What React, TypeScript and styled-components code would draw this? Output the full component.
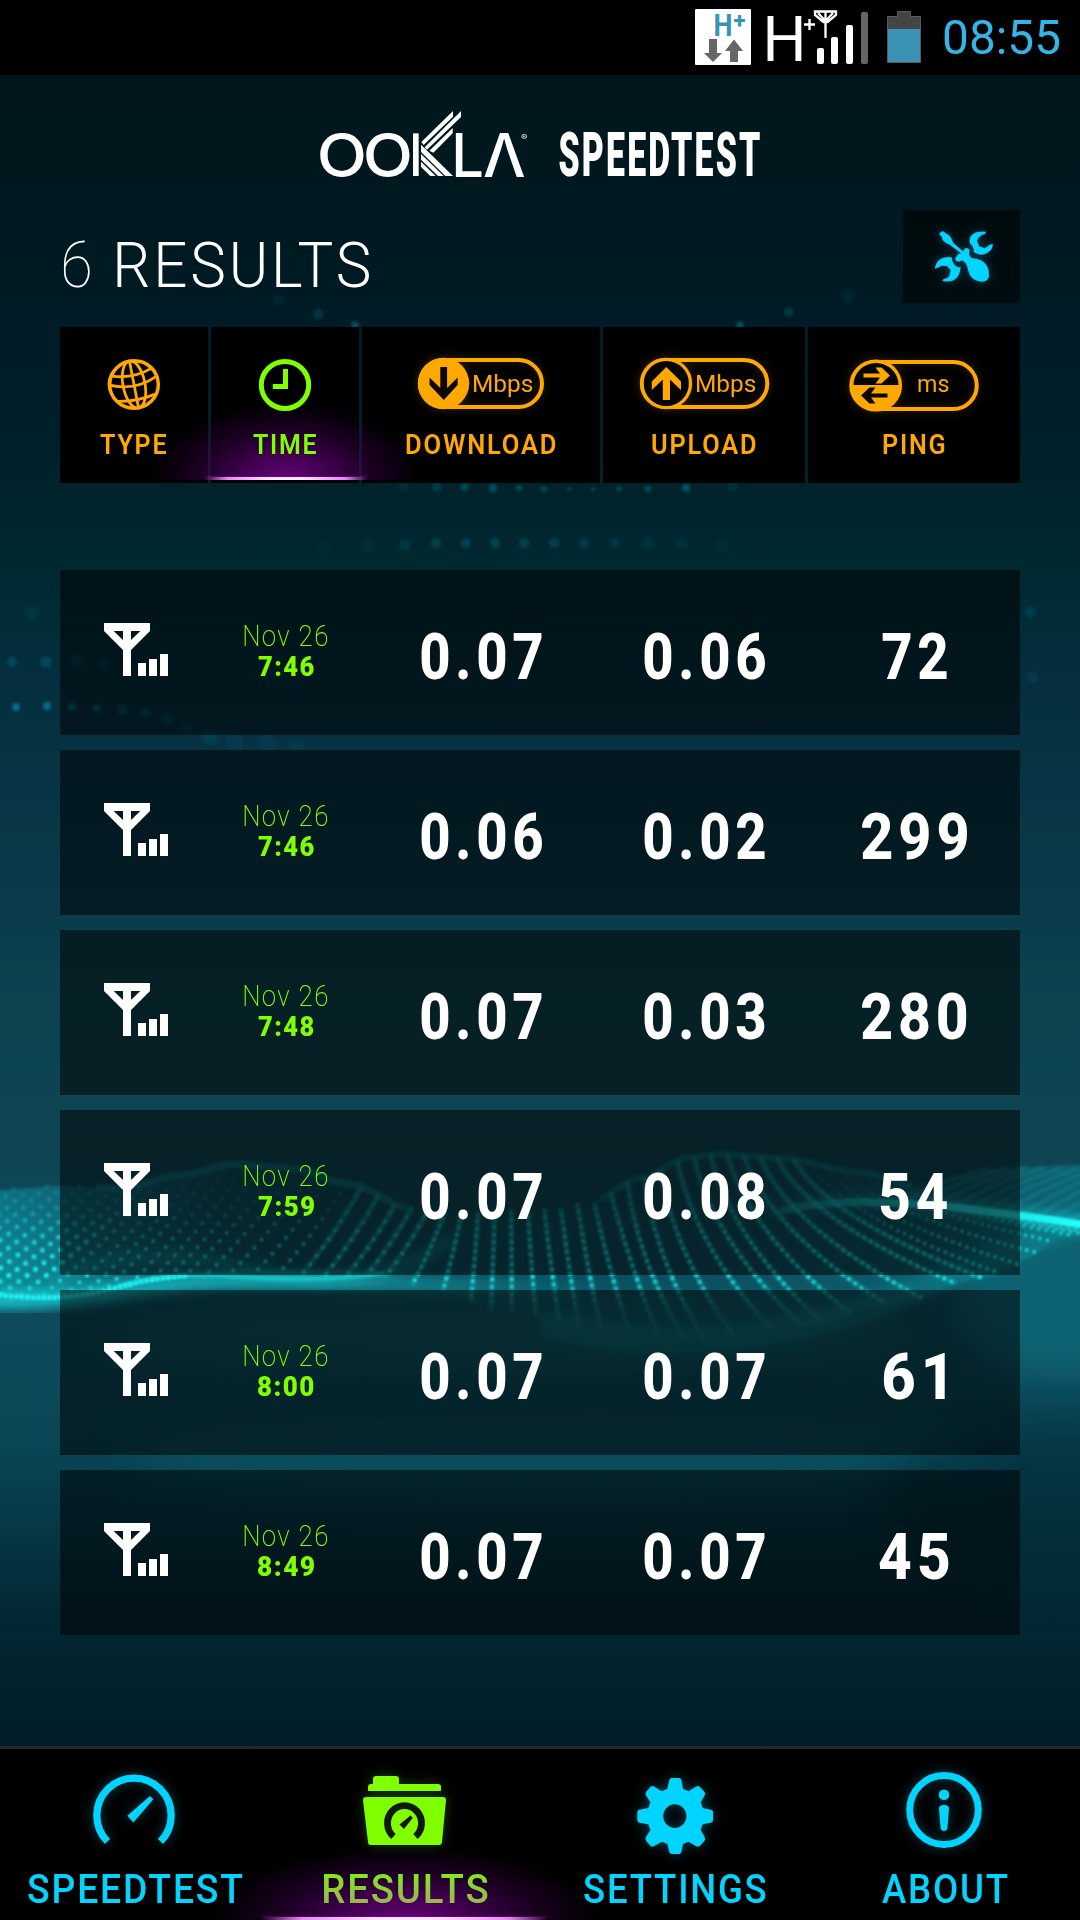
import React, { useLayoutEffect, useRef, useState } from 'react';
import styled, { createGlobalStyle } from 'styled-components';

const CYAN = '#00d4ff';
const ORANGE = '#ffa800';
const GREEN = '#80ff00';

const GlobalStyle = createGlobalStyle`
  *, *::before, *::after { box-sizing: border-box; }
  html, body { margin: 0; padding: 0; background: #000; }
  body { font-family: Roboto, 'Open Sans', 'Liberation Sans', sans-serif; }
  svg { display: block; flex: none; }
`;

/* ---------- Text fitted to an exact ink width ---------- */

const FitBox = styled.span<{ $w: number; $h: number }>`
  display: block;
  flex: none;
  width: ${p => p.$w}px;
  height: ${p => p.$h}px;
`;

const FitInk = styled.span<{
  $size: number; $h: number; $weight: number; $color: string; $spacing: number; $family?: string; $fade?: string;
}>`
  display: block;
  width: max-content;
  white-space: nowrap;
  transform-origin: 0 50%;
  font-family: ${p => p.$family ?? "Roboto, 'Liberation Sans', sans-serif"};
  font-size: ${p => p.$size}px;
  line-height: ${p => p.$h}px;
  font-weight: ${p => p.$weight};
  letter-spacing: ${p => p.$spacing}px;
  color: ${p => p.$color};
  ${p => p.$fade && `
    background: linear-gradient(${p.$color} 12%, ${p.$fade} 82%);
    background-clip: text;
    -webkit-background-clip: text;
    color: transparent;
  `}
`;

type FitProps = {
  children: string; w: number; h: number; size: number; weight?: number;
  color?: string; spacing?: number; family?: string; fade?: string;
};

function Fit({ children, w, h, size, weight = 400, color = '#fff', spacing = 0, family, fade }: FitProps) {
  const ref = useRef<HTMLSpanElement>(null);
  const [transform, setTransform] = useState('none');
  useLayoutEffect(() => {
    const el = ref.current;
    const ctx = document.createElement('canvas').getContext('2d');
    if (!el || !ctx) return;
    const cs = getComputedStyle(el);
    ctx.font = `${cs.fontWeight} ${cs.fontSize} ${cs.fontFamily}`;
    (ctx as any).letterSpacing = `${spacing}px`;
    const m = ctx.measureText(children);
    const left = -m.actualBoundingBoxLeft;
    const scale = w / (m.actualBoundingBoxRight - left);
    setTransform(`translateX(${-left * scale}px) scaleX(${scale})`);
  }, [children, w, spacing]);
  return (
    <FitBox $w={w} $h={h}>
      <FitInk ref={ref} $size={size} $h={h} $weight={weight} $color={color} $spacing={spacing}
        $family={family} $fade={fade} style={{ transform }}>
        {children}
      </FitInk>
    </FitBox>
  );
}

/* ---------- Page frame ---------- */

const Screen = styled.div`
  position: relative;
  display: flex;
  flex-direction: column;
  width: 1080px;
  height: 1920px;
  overflow: hidden;
  background: linear-gradient(180deg,
    #00161c 75px, #00181f 200px, #001b25 310px, #00222b 480px, #002a33 590px, #052f3f 690px,
    #0a3b4a 900px, #0c434f 1000px, #0f4553 1150px, #0e4c5d 1300px, #0a4656 1440px,
    #073c4a 1500px, #032a36 1600px, #001d26 1746px);
`;

const Backdrop = styled.svg`
  position: absolute;
  inset: 0;
`;

const StatusBar = styled.div`
  position: relative;
  display: flex;
  align-items: center;
  justify-content: flex-end;
  height: 75px;
  padding-right: 20.5px;
  background: #000;
`;

const Main = styled.main`
  position: relative;
  flex: 1;
  display: flex;
  flex-direction: column;
`;

const Brand = styled.div`
  display: flex;
  align-items: center;
  justify-content: center;
  height: 135px;
  padding-top: 25px;
`;

const LogoPart = styled.div<{ $ml?: number; $mb?: number }>`
  margin-left: ${p => p.$ml ?? 0}px;
  margin-bottom: ${p => p.$mb ?? 0}px;
`;

const TitleRow = styled.div`
  display: flex;
  justify-content: space-between;
  height: 93px;
  padding: 0 60px 0 64px;
`;

const Title = styled.h1`
  display: flex;
  align-items: center;
  gap: 27px;
  margin: 0;
  padding-top: 18px;
`;

const ToolsButton = styled.button`
  display: flex;
  align-items: center;
  justify-content: center;
  width: 117px;
  height: 93px;
  padding: 0 0 0 4px;
  border: 0;
  background: rgba(0, 0, 0, 0.55);
`;

const columns = 'display: grid; grid-template-columns: 148px 148px 238px 202px 212px; column-gap: 3px;';

const TableHead = styled.div`
  ${columns}
  height: 156px;
  margin: 24px 60px 0;
`;

const HeadCell = styled.div`
  position: relative;
  display: flex;
  flex-direction: column;
  align-items: center;
  gap: 18px;
  padding: 30px 1px 0 0;
  background: #000;
`;

const Glow = styled.div<{ $x: number; $w: number; $h: number; $bottom: number; $line: number }>`
  position: absolute;
  z-index: 1;
  left: ${p => p.$x}px;
  bottom: ${p => p.$bottom}px;
  width: ${p => p.$w}px;
  height: ${p => p.$h}px;
  background: radial-gradient(ellipse 50% 100% at 50% 100%,
    rgba(118, 0, 142, 0.85), rgba(92, 0, 112, 0.68) 35%, rgba(60, 0, 76, 0.45) 65%, rgba(30, 0, 40, 0) 100%);
  pointer-events: none;
  &::after {
    content: '';
    position: absolute;
    left: 50%;
    bottom: 0;
    width: ${p => p.$line}px;
    height: 3px;
    margin-left: ${p => -p.$line / 2}px;
    background: linear-gradient(90deg, transparent, #e48af0 14%, #ffe4ff 40%, #ffe4ff 60%, #e48af0 86%, transparent);
    box-shadow: 0 -1px 1px rgba(200, 0, 230, 0.3);
  }
`;

const List = styled.div`
  display: flex;
  flex-direction: column;
  gap: 15px;
  margin: 87px 60px 0;
`;

const ResultRow = styled.div`
  ${columns}
  height: 165px;
  background: rgba(0, 0, 0, 0.52);
`;

const Cell = styled.div<{ $top?: number; $bottom?: number; $left?: number }>`
  display: flex;
  flex-direction: column;
  align-items: center;
  justify-content: center;
  padding: ${p => p.$top ?? 0}px 0 ${p => p.$bottom ?? 0}px ${p => p.$left ?? 1.5}px;
`;

const Nav = styled.nav`
  position: relative;
  display: grid;
  grid-template-columns: repeat(4, 270px);
  height: 174px;
  border-top: 3px solid #20282b;
  background: #000;
`;

const NavItem = styled.div`
  position: relative;
  display: flex;
  flex-direction: column;
  align-items: center;
  gap: 9px;
  padding-top: 16px;
`;

const Lift = styled.div`
  position: relative;
  z-index: 2;
`;

/* ---------- Backdrop drawing ---------- */

const lerpTable = (table: number[][], x: number, k = 1) => {
  if (x <= table[0][0]) return table[0][k];
  for (let i = 1; i < table.length; i++) {
    if (x <= table[i][0]) {
      const t = (x - table[i - 1][0]) / (table[i][0] - table[i - 1][0]);
      const s = t * t * (3 - 2 * t);
      return table[i - 1][k] + (table[i][k] - table[i - 1][k]) * s;
    }
  }
  return table[table.length - 1][k];
};

const crest = [[0, 1190], [60, 1186], [120, 1188], [180, 1175], [235, 1164], [290, 1168], [350, 1184], [410, 1208],
  [470, 1214], [545, 1210], [590, 1203], [640, 1178], [690, 1157], [720, 1154], [780, 1158], [860, 1172], [920, 1186]];
const trough = [[-60, 1292], [60, 1298], [120, 1287], [190, 1276], [370, 1276], [440, 1292], [500, 1312], [600, 1328],
  [700, 1340], [800, 1326], [900, 1303], [980, 1278], [1080, 1235]];
const shear = [[-40, -150], [120, -130], [265, -95], [420, -45], [490, -4], [560, 18], [640, 60], [700, 110], [800, 190], [920, 200]];

const strands = Array.from({ length: 57 }, (_, i) => {
  const x = -20 + i * 16.6;
  const bx = x + lerpTable(shear, x);
  const y0 = lerpTable(crest, x);
  const y1 = lerpTable(trough, bx);
  const pull = x > 620 ? 0.18 : 0.4;
  return { x, d: `M${x.toFixed(1)} ${y0.toFixed(1)}Q${(x + (bx - x) * pull).toFixed(1)} ${((y0 + y1) / 2).toFixed(1)} ${bx.toFixed(1)} ${y1.toFixed(1)}` };
});

const curve = (table: number[][], from: number, to: number) => {
  const pts: string[] = [];
  for (let x = from; x <= to; x += 12) pts.push(`${x} ${lerpTable(table, x).toFixed(1)}`);
  return pts.join('L');
};

const motes: number[][] = [
  [279, 300, 6, 0.1], [318, 314, 5, 0.28], [355, 325, 3.5, 0.6],
  [740, 325, 3.5, 0.6], [789, 312, 5, 0.28], [848, 297, 7, 0.1],
  [403, 487, 5, 0.12], [437, 487, 5, 0.25], [465, 487, 4, 0.42], [493, 488, 4, 0.5], [519, 488, 3, 0.5], [544, 489, 3, 0.45],
  [569, 489, 2, 0.5], [593, 489, 2, 0.5], [619, 489, 2.5, 0.5], [648, 489, 3, 0.5], [686, 488, 4, 0.55], [733, 487, 5, 0.18],
  [325, 547, 8, 0.04], [368, 546, 7, 0.09], [405, 545, 6, 0.18], [436, 543, 5, 0.28], [466, 543, 5, 0.32], [495, 543, 5, 0.32],
  [524, 543, 5, 0.3], [554, 543, 5, 0.28], [584, 543, 5, 0.22], [615, 543, 5, 0.2], [648, 543, 6, 0.15], [682, 543, 6, 0.1], [722, 545, 7, 0.06],
  [32, 613, 7, 0.12], [1030, 612, 6, 0.2], [1033, 677, 6, 0.14],
  [12, 662, 5, 0.32], [46, 662, 6, 0.3], [77, 661, 6, 0.2], [103, 663, 6, 0.16],
  [16, 707, 4, 0.75], [47, 706, 4, 0.75], [72, 707, 4, 0.6], [97, 708, 4, 0.55], [122, 710, 5, 0.4], [146, 713, 5, 0.35],
  [167, 719, 6, 0.25], [187, 728, 7, 0.15], [210, 737, 8, 0.16], [235, 742, 9, 0.12], [267, 743, 9, 0.1], [297, 747, 9, 0.08],
];

function Waves() {
  return (
    <Backdrop width="1080" height="1920" viewBox="0 0 1080 1920" fill="none">
      <defs>
        <filter id="soft1" x="-10%" y="-40%" width="120%" height="180%"><feGaussianBlur stdDeviation="0.8" /></filter>
        <filter id="soft2" x="-20%" y="-20%" width="140%" height="140%"><feGaussianBlur stdDeviation="1.8" /></filter>
        <filter id="soft6" x="-20%" y="-60%" width="140%" height="220%"><feGaussianBlur stdDeviation="6" /></filter>
        <filter id="soft20" x="-30%" y="-100%" width="160%" height="300%"><feGaussianBlur stdDeviation="20" /></filter>
        <linearGradient id="leftHaze" x1="0" y1="1185" x2="0" y2="1300" gradientUnits="userSpaceOnUse">
          <stop offset="0" stopColor="#117f92" stopOpacity="0.75" /><stop offset="1" stopColor="#0fa2ac" stopOpacity="0.9" />
        </linearGradient>
        <linearGradient id="fadeRight" x1="0" x2="1080" y1="0" y2="0" gradientUnits="userSpaceOnUse">
          <stop offset="0" stopColor="#fff" stopOpacity="0.95" /><stop offset="0.08" stopColor="#fff" stopOpacity="0.6" />
          <stop offset="0.2" stopColor="#fff" stopOpacity="0.2" /><stop offset="0.3" stopColor="#fff" stopOpacity="0.04" />
          <stop offset="0.65" stopColor="#fff" stopOpacity="0.03" />
          <stop offset="0.85" stopColor="#fff" stopOpacity="0.25" /><stop offset="1" stopColor="#fff" stopOpacity="0.6" />
        </linearGradient>
        <mask id="hazeMask" maskUnits="userSpaceOnUse" x="0" y="1100" width="1080" height="400">
          <rect x="0" y="1100" width="1080" height="400" fill="url(#fadeRight)" />
        </mask>
        <linearGradient id="strandFade" x1="0" y1="1150" x2="0" y2="1345" gradientUnits="userSpaceOnUse">
          <stop offset="0" stopColor="#13a0aa" stopOpacity="0.5" /><stop offset="0.5" stopColor="#16b8bd" stopOpacity="0.5" />
          <stop offset="1" stopColor="#0e7886" stopOpacity="0.5" />
        </linearGradient>
        <linearGradient id="dotFade" x1="0" y1="1165" x2="0" y2="1310" gradientUnits="userSpaceOnUse">
          <stop offset="0" stopColor="#14b2ba" stopOpacity="0.05" /><stop offset="0.3" stopColor="#18c2c8" stopOpacity="0.35" />
          <stop offset="0.5" stopColor="#1bd6da" stopOpacity="0.85" />
          <stop offset="0.76" stopColor="#20f2f2" stopOpacity="1" /><stop offset="1" stopColor="#20f2f2" stopOpacity="0" />
        </linearGradient>
        <linearGradient id="beam" x1="760" y1="0" x2="1080" y2="0" gradientUnits="userSpaceOnUse">
          <stop offset="0" stopColor="#17c8cc" stopOpacity="0.2" /><stop offset="0.5" stopColor="#1fe0e0" stopOpacity="0.75" />
          <stop offset="1" stopColor="#20ffff" />
        </linearGradient>
        <linearGradient id="rim" x1="0" y1="0" x2="620" y2="0" gradientUnits="userSpaceOnUse">
          <stop offset="0" stopColor="#1cf0f2" /><stop offset="0.5" stopColor="#19cdd2" stopOpacity="0.85" />
          <stop offset="1" stopColor="#159fae" stopOpacity="0" />
        </linearGradient>
      </defs>

      <g filter="url(#soft2)">
        {motes.map(([x, y, r, o], i) => <circle key={i} cx={x} cy={y} r={r} fill="#0a8099" opacity={o} />)}
      </g>

      <ellipse cx="520" cy="1335" rx="420" ry="42" fill="#0c7478" opacity="0.35" filter="url(#soft20)" />
      <ellipse cx="560" cy="1455" rx="440" ry="40" fill="#0a6573" opacity="0.35" filter="url(#soft20)" />
      <ellipse cx="1060" cy="1300" rx="110" ry="80" fill="#118090" opacity="0.45" filter="url(#soft20)" />
      <ellipse cx="1080" cy="1500" rx="200" ry="80" fill="#02202a" opacity="0.4" filter="url(#soft20)" />

      <g mask="url(#hazeMask)" filter="url(#soft2)">
        <path d={`M-12 1192L${curve(crest, 0, 912)}L1000 1168L1092 1164V1232L${curve(trough, 0, 1080).split('L').reverse().join('L')}Z`} fill="url(#leftHaze)" />
      </g>
      <path d="M1100 1222C1000 1245 930 1290 860 1310C760 1345 640 1352 540 1322" stroke="#0e8088" strokeWidth="26" opacity="0.5" filter="url(#soft6)" />
      <path d={`M${curve(crest, 96, 410)}`} stroke="#118b94" strokeWidth="7" opacity="0.5" filter="url(#soft2)" />
      <path d={`M${curve(crest, 600, 912)}`} stroke="#118b94" strokeWidth="6" opacity="0.45" filter="url(#soft2)" />
      <path d="M-10 1300C80 1303 120 1288 200 1282C300 1278 380 1284 600 1290" stroke="url(#rim)" strokeWidth="16" opacity="0.75" filter="url(#soft6)" />
      <path d="M50 1285C110 1245 190 1255 260 1272C330 1286 400 1278 450 1240" stroke="#16b9bb" strokeWidth="12" opacity="0.35" filter="url(#soft6)" />

      <g filter="url(#soft2)" stroke="url(#strandFade)" strokeWidth="5">
        {strands.filter(s => s.x > 350 && s.x < 810).map((s, i) => <path key={i} d={s.d} />)}
      </g>
      <g filter="url(#soft1)" stroke="url(#dotFade)" strokeLinecap="round">
        {strands.map((s, i) => (
          <path key={i} d={s.d} strokeWidth={s.x < 160 ? 5 : 4} strokeDasharray={s.x < 430 ? '0 10.5' : '0 7.5'} strokeDashoffset={i % 2} />
        ))}
      </g>
      <path d="M0 1295C60 1302 95 1294 130 1284C150 1279 175 1277 190 1275" stroke="#20f6f6" strokeWidth="5" strokeDasharray="0 5.5" strokeLinecap="round" filter="url(#soft1)" />
      <path d="M118 1287C150 1276 200 1274 240 1277C290 1280 340 1280 385 1273" stroke="#1be4e6" strokeWidth="4" opacity="0.65" filter="url(#soft2)" />

      {Array.from({ length: 12 }, (_, i) => (
        <path key={i} d={`M${900 + i * 17} ${1204 + i * 1.7}Q${930 + i * 18} ${1183 + i} ${990 + i * 18} 1168`}
          stroke="#1497a2" strokeWidth="4" opacity="0.3" filter="url(#soft2)" />
      ))}
      <path d="M760 1212C830 1196 880 1199 960 1208C1010 1214 1050 1219 1090 1226" stroke="url(#beam)" strokeWidth="14" opacity="0.4" filter="url(#soft6)" />
      <path d="M780 1211C830 1199 880 1200 960 1208C1010 1214 1050 1219 1090 1226" stroke="url(#beam)" strokeWidth="7.500" filter="url(#soft1)" />
    </Backdrop>
  );
}

/* ---------- Status icons ---------- */

const StatusArt = styled.svg`
  overflow: visible;
`;

function StatusIcons() {
  return (
    <StatusArt width="249" height="75" viewBox="695 0 249 75">
      <rect x="695" y="9" width="56" height="56" rx="1" fill="#fff" />
      <g fill="#3a93b5">
        <text x="713.5" y="35.8" fontFamily="Roboto, sans-serif" fontWeight="700" fontSize="32" textLength="19" lengthAdjust="spacingAndGlyphs">H</text>
        <text x="733.5" y="28" fontFamily="Roboto, sans-serif" fontWeight="800" fontSize="22" textLength="12" lengthAdjust="spacingAndGlyphs">+</text>
      </g>
      <path d="M709 39h8v14h5l-9 9-9-9h5z M730 62v-11h-5l9-11.500 9 11.500h-5v11z" fill="#666" />
      <text x="762.500" y="61" fill="#fff" fontFamily="Roboto, sans-serif" fontWeight="400" fontSize="63" textLength="44" lengthAdjust="spacingAndGlyphs">H</text>
      <path d="M804 24.500h11M809.500 19v11" stroke="#fff" strokeWidth="2.400" />
      <path d="M815 11.500h21v3.500l-8.500 7h-4l-8.500-7zM825.500 11v27M818 13l7.500 8 7.500-8" fill="none" stroke="#fff" strokeWidth="2.300" />
      <g fill="#fff">
        <rect x="817" y="48" width="7" height="16" rx="2" /><rect x="831" y="37" width="7" height="27" rx="2" />
        <rect x="846" y="25" width="7" height="39" rx="2" /><rect x="861" y="12" width="7" height="52" rx="2" fill="#666" />
      </g>
      <path d="M887.500 62.500v-46h10v-5h13v5h10v46z" fill="#444" stroke="#5b5b5b" />
      <rect x="888" y="29" width="32" height="33" fill="#3a93b5" />
    </StatusArt>
  );
}

const LogoRays = () => (
  <svg width="48.7" height="66.7" viewBox="339 60 146 200" fill="#fff">
    <path d="M339 130h17v128h-17z" />
    <path d="M364 156L459 63v17L371 165zM374 172L483 63v18L381 179zM388 182L458 114v16L400 188z" />
    <path d="M363 164L459 258h-23L363 186zM363 192L431 258h-17L363 209zM363 215L407 258h-16L363 231z" />
  </svg>
);

const ToolsIcon = () => (
  <svg width="60" height="53.400" viewBox="1059 120 180 160" fill={CYAN} style={{ filter: 'drop-shadow(0 0 4px rgba(0,190,240,.35))' }}>
    <path d="M1074 131L1084 123L1102 134Q1110 140 1117 159L1146 184L1154 174Q1161 173 1166 180L1164 193L1170 203Q1190 206 1203 212Q1226 228 1224 258Q1222 276 1202 275Q1178 274 1167 256Q1162 245 1158 228L1154 219L1143 211L1135 215Q1124 214 1122 206L1131 193L1140 190L1106 164Q1093 160 1085 151L1082 140Z" />
    <path d="M1215 125Q1183 122 1170 138Q1163 149 1168 162Q1178 168 1179 187Q1197 199 1214 191Q1235 182 1236 163L1229 163L1211 175L1195 169L1188 152Q1194 136 1213 131Z" />
    <path d="M1084 273Q1112 279 1127 264Q1138 250 1139 232L1129 231Q1113 223 1112 202Q1091 197 1073 211Q1062 223 1062 237L1082 227L1098 228L1109 240L1105 258Q1099 266 1087 268Z" />
  </svg>
);

/* ---------- Column heading icons ---------- */

const GlobeIcon = () => (
  <svg width="56" height="54" viewBox="105 357 56 54" fill="none" stroke={ORANGE} strokeWidth="2.800">
    <ellipse cx="133" cy="384.500" rx="24.300" ry="23.800" strokeWidth="3.500" />
    <g transform="rotate(-11 133 384.500)">
      <path d="M133 361v47M110 381q23 10 46 0M113 372q20 7 40 0M114 398q19 4 38 0" />
      <ellipse cx="133" cy="384.500" rx="11" ry="24" />
      <path d="M124 362q-18 8-16 24M142 362q18 8 15 26" strokeWidth="2" />
    </g>
  </svg>
);

const ClockIcon = () => (
  <svg width="56" height="54" viewBox="257 357 56 54" fill="none" stroke={GREEN}>
    <ellipse cx="285" cy="385" rx="23.700" ry="23.500" strokeWidth="5" />
    <path d="M285.500 369v17.500h-12.700" strokeWidth="5" />
  </svg>
);

const glowOrange = { filter: 'drop-shadow(0 0 5px rgba(255,168,0,.22))' };

const Pill = styled.div<{ $pad: number }>`
  position: relative;
  display: flex;
  align-items: center;
  width: 130px;
  height: 54px;
  padding-left: ${p => p.$pad}px;
`;

const PillArt = styled.svg`
  position: absolute;
  left: 0;
  top: 0;
  overflow: visible;
`;

const DownloadIcon = () => (
  <Pill $pad={57}>
    <PillArt width="130" height="54" viewBox="416 357 130 54" style={glowOrange}>
      <rect x="420" y="360" width="122" height="47" rx="23.500" fill="none" stroke={ORANGE} strokeWidth="4" />
      <circle cx="443.500" cy="383.500" r="25.700" fill={ORANGE} />
      <path d="M440.300 367h6.800v21l10.500-10.500v7.500L443.800 400 429.500 385v-7.500L440.300 388z" fill="#0c0800" />
    </PillArt>
    <Fit w={60} h={30} size={24} color={ORANGE}>Mbps</Fit>
  </Pill>
);

const UploadIcon = () => (
  <Pill $pad={57}>
    <PillArt width="130" height="54" viewBox="639 357 130 54" style={glowOrange}>
      <rect x="641.800" y="360" width="125.500" height="47" rx="23.500" fill="none" stroke={ORANGE} strokeWidth="4" />
      <circle cx="666.300" cy="383.500" r="24.200" fill="#060400" stroke={ORANGE} strokeWidth="3.300" />
      <path d="M666.300 367l14.700 14.500v8.500l-11-10.500v20.500h-7.200v-20.500l-11 10.500v-8.500z" fill={ORANGE} />
    </PillArt>
    <Fit w={60} h={30} size={24} color={ORANGE}>Mbps</Fit>
  </Pill>
);

const PingIcon = () => (
  <Pill $pad={69}>
    <PillArt width="130" height="54" viewBox="848.500 357 130 54" style={glowOrange}>
      <rect x="850.800" y="362" width="125.500" height="47" rx="23.500" fill="none" stroke={ORANGE} strokeWidth="4" />
      <circle cx="875.500" cy="385.500" r="24.300" fill="#060400" stroke={ORANGE} strokeWidth="3.500" />
      <path d="M850 385h51a25.500 25.500 0 0 1-51 0z" fill={ORANGE} />
      <path d="M863 373.500h16.500L875 367.500h6l8.500 8-8.500 8h-6l4.500-6H863z" fill={ORANGE} />
      <path d="M887 393.500h-16.500l4.500-6h-6l-8.500 8 8.500 8h6l-4.500-6H887z" fill="#0c0800" />
    </PillArt>
    <Fit w={31} h={30} size={24} color={ORANGE}>ms</Fit>
  </Pill>
);

/* ---------- Row and navigation icons ---------- */

const CellularIcon = () => (
  <svg width="64" height="53" viewBox="162 189 192 159" fill="#fff">
    <path fillRule="evenodd" d="M162 189H300V213L243 270V348H219V270L162 213ZM191 213L219 240V213ZM243 213V240L271 213Z" />
    <path d="M264 309h24v39h-24zM297 297h24v51h-24zM330 282h24v66h-24z" />
  </svg>
);

const glowCyan = { filter: 'drop-shadow(0 0 6px rgba(0,170,210,.4))', overflow: 'visible' as const };

const GaugeIcon = () => (
  <svg width="84" height="95" viewBox="93 1765 84 95" style={glowCyan}>
    <path d="M107.500 1841.500A37.200 37.200 0 1 1 160.500 1841.500" fill="none" stroke={CYAN} strokeWidth="7.300" />
    <path d="M127.300 1815.700L150 1796l3.400 3.200-20 23.200z" fill={CYAN} />
  </svg>
);

const FolderIcon = () => (
  <svg width="84" height="95" viewBox="363 1765 84 95" style={{ filter: 'drop-shadow(0 0 6px rgba(128,255,0,.25))', overflow: 'visible' }}>
    <path d="M368 1791v-4q0-3 3-3h2v-5q0-3 3-3h20q3 0 3 3v5h39q3 0 3 3v4z" fill={GREEN} />
    <path d="M366 1797h77q3 0 3 3l-4 42q-.300 3-3 3h-68q-3 0-3-3l-5-42q0-3 3-3z" fill={GREEN} />
    <path d="M393.500 1836.500A17 17.500 0 1 1 415.500 1836.500" fill="none" stroke="#101806" strokeWidth="6.800" />
    <path d="M399.500 1824.500l11-9 2.300 2.200-8.800 11.300z" fill="#101806" />
  </svg>
);

const GearIcon = () => (
  <svg width="84" height="95" viewBox="269.500 105 244 285" preserveAspectRatio="none" fill={CYAN} style={glowCyan}>
    <path fillRule="evenodd" d="M382 144H403Q409 144 410 150L415 177L431 184L452 170Q459 166 464 171L477 185Q481 190 478 196L466 217L472 234L496 239Q502 240 502 246V271Q502 277 496 278L472 283L466 300L478 322Q481 328 477 333L464 347Q459 352 452 348L431 335L415 341L410 366Q409 372 403 372H382Q376 372 375 366L369 341L353 335L332 348Q325 352 320 347L308 333Q304 328 307 322L320 300L314 283L288 278Q282 277 282 271V246Q282 240 288 239L314 234L320 217L307 196Q304 190 308 185L320 171Q325 166 332 170L353 184L369 177L375 150Q376 144 382 144ZM391 223A33.500 35.500 0 1 0 391 294A33.500 35.500 0 1 0 391 223Z" />
  </svg>
);

const InfoIcon = () => (
  <svg width="84" height="95" viewBox="903 1765 84 95" style={glowCyan}>
    <ellipse cx="944" cy="1810" rx="34.300" ry="34.500" fill="none" stroke={CYAN} strokeWidth="7" />
    <circle cx="944" cy="1794.700" r="5.300" fill={CYAN} />
    <path d="M939 1808.500q0-3.500 5-3.500t5 3.500l-1.500 19q-.500 3.500-3.500 3.500t-3.500-3.500z" fill={CYAN} />
  </svg>
);

/* ---------- Data ---------- */

const headings = [
  { label: 'TYPE', w: 66.5, icon: <GlobeIcon /> },
  { label: 'TIME', w: 63.5, icon: <ClockIcon />, active: true },
  { label: 'DOWNLOAD', w: 150, icon: <DownloadIcon /> },
  { label: 'UPLOAD', w: 104, icon: <UploadIcon /> },
  { label: 'PING', w: 61.5, icon: <PingIcon /> },
];

const results = [
  { time: '7:46', down: '0.07', up: '0.06', ping: '72', pingW: 65 },
  { time: '7:46', down: '0.06', up: '0.02', ping: '299', pingW: 105 },
  { time: '7:48', down: '0.07', up: '0.03', ping: '280', pingW: 105 },
  { time: '7:59', down: '0.07', up: '0.08', ping: '54', pingW: 67.5 },
  { time: '8:00', down: '0.07', up: '0.07', ping: '61', pingW: 62 },
  { time: '8:49', down: '0.07', up: '0.07', ping: '45', pingW: 70 },
];

const tabs = [
  { label: 'SPEEDTEST', w: 215, icon: <GaugeIcon /> },
  { label: 'RESULTS', w: 165, icon: <FolderIcon />, active: true },
  { label: 'SETTINGS', w: 182, icon: <GearIcon /> },
  { label: 'ABOUT', w: 126, icon: <InfoIcon /> },
];

const Figure = ({ children, w }: { children: string; w: number }) => (
  <Fit w={w} h={70} size={64} weight={800} spacing={5.5}>{children}</Fit>
);

const logoFont = { size: 60, h: 64, family: 'Inter, sans-serif' };

export default function App() {
  return (
    <>
      <GlobalStyle />
      <Screen>
        <Waves />
        <StatusBar>
          <StatusIcons />
          <Fit w={115.5} h={80} size={49} color="#33b5e5">08:55</Fit>
        </StatusBar>

        <Main>
          <Brand>
            <LogoPart><Fit {...logoFont} w={43.700} weight={450}>O</Fit></LogoPart>
            <LogoPart $ml={2.500}><Fit {...logoFont} w={43.700} weight={450}>O</Fit></LogoPart>
            <LogoPart $ml={3} $mb={23.500}><LogoRays /></LogoPart>
            <LogoPart $ml={-6.500}><Fit {...logoFont} w={27} weight={500}>L</Fit></LogoPart>
            <LogoPart $ml={2}><Fit {...logoFont} w={41} weight={500}>Λ</Fit></LogoPart>
            <LogoPart $ml={-4.500} $mb={37}><Fit w={6} h={10} size={8} family="Inter, sans-serif">®</Fit></LogoPart>
            <LogoPart $ml={32.500}><Fit w={201} h={66} size={61.5} weight={900} spacing={4}>SPEEDTEST</Fit></LogoPart>
          </Brand>

          <TitleRow>
            <Title>
              <Fit w={26} h={70} size={64} weight={250}>6</Fit>
              <Fit w={252} h={70} size={63} weight={300} spacing={3}>RESULTS</Fit>
            </Title>
            <ToolsButton><ToolsIcon /></ToolsButton>
          </TitleRow>

          <TableHead>
            {headings.map(h => (
              <HeadCell key={h.label}>
                {h.active && <Glow $x={-60} $w={270} $h={78} $bottom={3} $line={162} />}
                <Lift>{h.icon}</Lift>
                <Lift><Fit w={h.w} h={32} size={28.5} weight={600} spacing={2} color={h.active ? GREEN : ORANGE}>{h.label}</Fit></Lift>
              </HeadCell>
            ))}
          </TableHead>

          <List>
            {results.map((r, i) => (
              <ResultRow key={i}>
                <Cell $bottom={6} $left={4}><CellularIcon /></Cell>
                <Cell $bottom={3}>
                  <Fit w={83.5} h={31} size={29} weight={200} spacing={1.5} color={GREEN}>Nov 26</Fit>
                  <Fit w={56} h={30} size={28} weight={900} spacing={1.5} color={GREEN}>{r.time}</Fit>
                </Cell>
                <Cell $top={11}><Figure w={121}>{r.down}</Figure></Cell>
                <Cell $top={11}><Figure w={121}>{r.up}</Figure></Cell>
                <Cell $top={11} $left={0}><Figure w={r.pingW}>{r.ping}</Figure></Cell>
              </ResultRow>
            ))}
          </List>
        </Main>

        <Nav>
          {tabs.map(t => (
            <NavItem key={t.label}>
              {t.active && <Glow $x={-60} $w={390} $h={74} $bottom={0} $line={286} />}
              <Lift>{t.icon}</Lift>
              <Lift>
                <Fit w={t.w} h={40} size={41} weight={550} spacing={2} color={t.active ? '#84e81c' : CYAN} fade={t.active ? '#9bb650' : undefined}>
                  {t.label}
                </Fit>
              </Lift>
            </NavItem>
          ))}
        </Nav>
      </Screen>
    </>
  );
}
